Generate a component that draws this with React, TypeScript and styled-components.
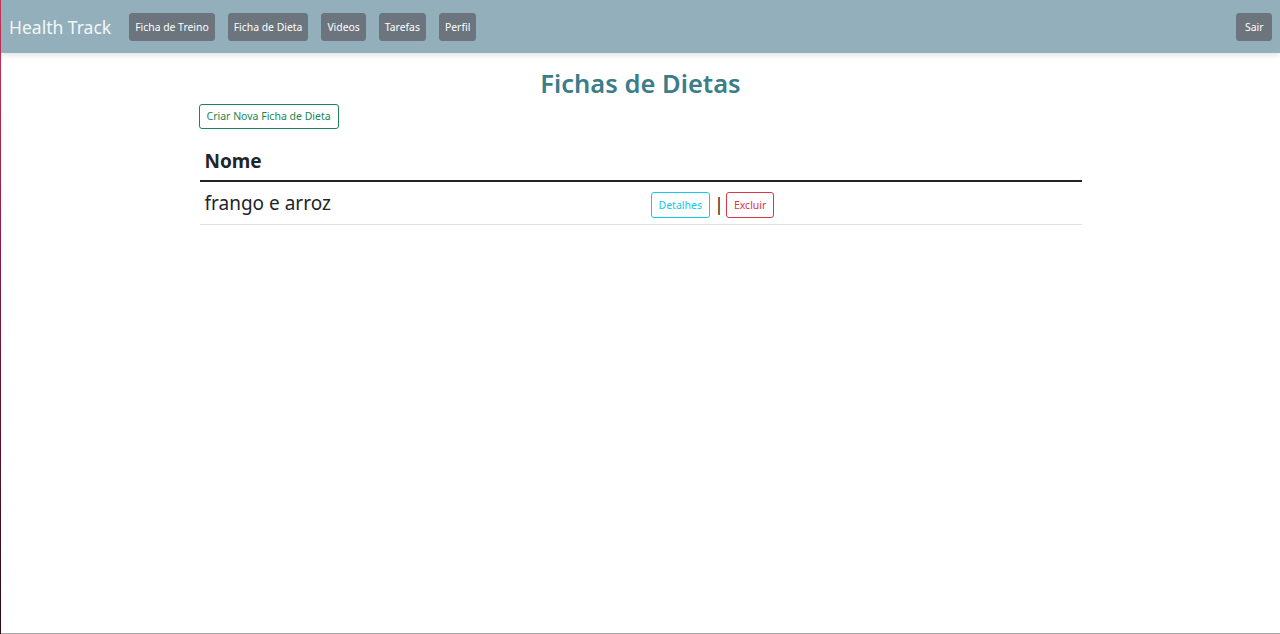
import React from "react";
import styled, { createGlobalStyle } from "styled-components";

const Global = createGlobalStyle`
  html, body { margin: 0; padding: 0; background: #fff; }
  body { font-family: "Noto Sans", "Open Sans", sans-serif; color: #212529; }
  * { box-sizing: border-box; }
`;

const Page = styled.div`
  min-height: 634px;
  border-style: solid;
  border-width: 0 0 0 1px;
  border-image: linear-gradient(#d0345e, #7a1535 50%, #2a0a14) 1;
  box-shadow: inset 0 -1px 0 #a8a8a8;
`;

const Navbar = styled.nav`
  height: 53px;
  background: #93afbb;
  display: flex;
  align-items: center;
  padding: 0 8px 0 8px;
  box-shadow: 0 2px 6px rgba(0, 0, 0, 0.12);
`;

const Brand = styled.span`
  font-size: 17.5px;
  color: #f4f7f8;
  margin-right: 18px;
  white-space: nowrap;
`;

const NavList = styled.div`
  display: flex;
  gap: 13px;
  flex: 1;
`;

const NavButton = styled.button<{ $pad?: number }>`
  height: 28px;
  padding: 0 ${(p) => p.$pad ?? 5}px;
  background: #6c757d;
  color: #fff;
  border: 1px solid #6c757d;
  border-radius: 3px;
  font-family: inherit;
  font-size: 10.4px;
  white-space: nowrap;
`;

const Main = styled.main`
  width: 882px;
  margin: 0 auto;
  padding-top: 13px;
`;

const Title = styled.h1`
  margin: 0;
  text-align: center;
  font-size: 25.5px;
  font-weight: 600;
  color: #3b7d89;
  line-height: 34px;
`;

const OutlineButton = styled.button<{ $c: string; $h?: number }>`
  height: ${(p) => p.$h ?? 25}px;
  padding: 0 7px;
  background: #fff;
  color: ${(p) => p.$c};
  border: 1px solid ${(p) => p.$c};
  border-radius: 3px;
  font-family: inherit;
  font-size: 10.5px;
  white-space: nowrap;
`;

const CreateRow = styled.div`
  margin-top: 3px;
  margin-left: -1px;
`;

const Table = styled.table`
  width: 100%;
  border-collapse: collapse;
  margin-top: 12px;
`;

const Th = styled.th`
  text-align: left;
  font-size: 19px;
  font-weight: 700;
  padding: 2px 5px 0;
  height: 40px;
  border-bottom: 2px solid #212529;
`;

const Td = styled.td<{ $w?: number }>`
  height: 44px;
  width: ${(p) => (p.$w ? `${p.$w}px` : "auto")};
  padding: 0 5px;
  border-bottom: 1px solid #dee2e6;
  font-size: 19px;
  vertical-align: middle;
`;

const Actions = styled.div`
  display: flex;
  align-items: center;
  gap: 4px;
  padding-top: 5px;
`;

const Sep = styled.span`
  display: inline-block;
  width: 8px;
  text-align: center;
  font-size: 18px;
  color: #212529;
  line-height: 1;
  margin-top: -3px;
`;

export default function App() {
  return (
    <Page>
      <Global />
      <Navbar>
        <Brand>Health Track</Brand>
        <NavList>
          <NavButton>Ficha de Treino</NavButton>
          <NavButton>Ficha de Dieta</NavButton>
          <NavButton>Videos</NavButton>
          <NavButton>Tarefas</NavButton>
          <NavButton>Perfil</NavButton>
        </NavList>
        <NavButton $pad={7.5}>Sair</NavButton>
      </Navbar>
      <Main>
        <Title>Fichas de Dietas</Title>
        <CreateRow>
          <OutlineButton $c="#198754">Criar Nova Ficha de Dieta</OutlineButton>
        </CreateRow>
        <Table>
          <thead>
            <tr>
              <Th>Nome</Th>
              <Th></Th>
            </tr>
          </thead>
          <tbody>
            <tr>
              <Td $w={446}>frango e arroz</Td>
              <Td>
                <Actions>
                  <OutlineButton $c="#0dcaf0" $h={26}>Detalhes</OutlineButton>
                  <Sep>|</Sep>
                  <OutlineButton $c="#dc3545" $h={26}>Excluir</OutlineButton>
                </Actions>
              </Td>
            </tr>
          </tbody>
        </Table>
      </Main>
    </Page>
  );
}
